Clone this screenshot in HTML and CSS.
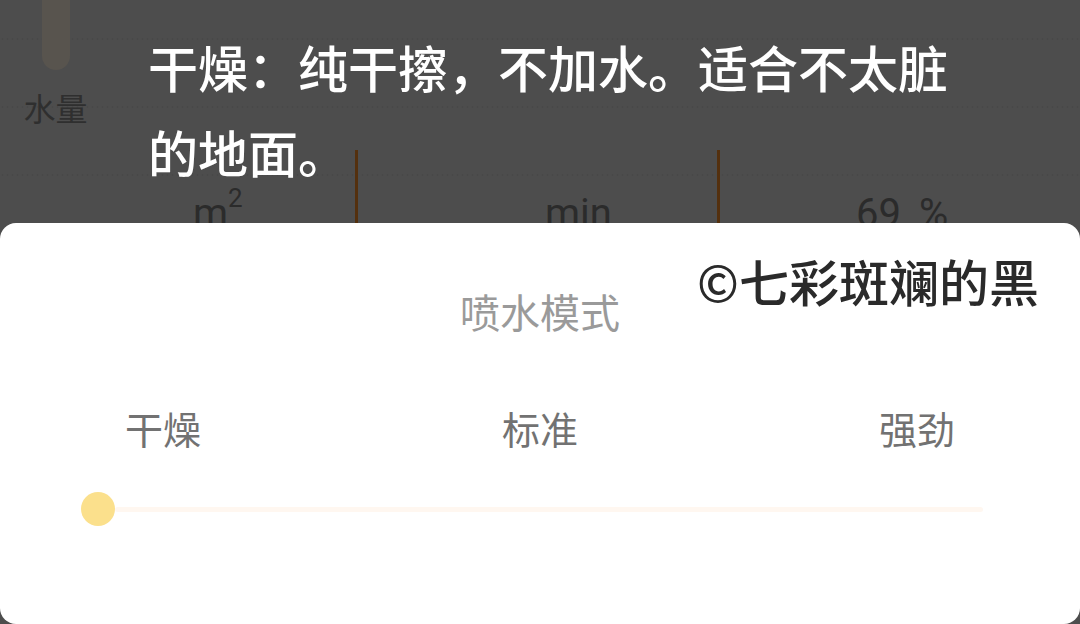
FILE: index.html
```html
<!DOCTYPE html>
<html lang="zh-CN">

<head>
    <meta charset="UTF-8" />
    <meta name="viewport" content="width=device-width, initial-scale=1.0" />
    <title>喷水模式</title>
    <link rel="stylesheet" href="styles.css">
</head>

<body>
    <!-- Page behind the sheet (dimmed) -->
    <div class="app">
        <div class="water">
            <div class="water-bar"></div>
            <div class="water-label">水量</div>
        </div>

        <div class="stats">
            <div class="stat stat-area">m<sup>2</sup></div>
            <div class="stat stat-time">min</div>
            <div class="stat stat-battery">69<span class="unit">%</span></div>
        </div>
    </div>

    <!-- Mode hint -->
    <div class="caption">干燥：纯干擦，不加水。适合不太脏的地面。</div>

    <!-- Bottom sheet -->
    <div class="sheet">
        <h2 class="sheet-title">喷水模式</h2>

        <div class="modes">
            <span>干燥</span>
            <span>标准</span>
            <span>强劲</span>
        </div>

        <div class="slider">
            <div class="slider-thumb"></div>
            <div class="slider-track"></div>
        </div>

        <div class="watermark">©七彩斑斓的黑</div>
    </div>
</body>

</html>
```

FILE: styles.css
```css
body {
    font-family: "Noto Sans CJK SC", "Noto Sans", sans-serif;
    margin: 0;
    width: 1080px;
    height: 624px;
    overflow: hidden;
    position: relative;
    background-color: #4d4d4d;
    background-image:
        radial-gradient(circle, rgba(0, 0, 0, 0.06) 0.8px, transparent 1.2px);
    background-size: 5px 68px;
    background-position: 0 5px;
}

.water {
    width: 112px;
    display: flex;
    flex-direction: column;
    align-items: center;
}

.water-bar {
    width: 28px;
    height: 70px;
    background-color: #58544e;
    border-radius: 0 0 14px 14px;
}

.water-label {
    margin-top: 16px;
    margin-left: -1px;
    font-size: 32px;
    line-height: 42px;
    color: #2f2f2f;
}

.stats {
    display: flex;
    margin-top: 22px;
    height: 80px;
}

.stat {
    font-family: Roboto, "Noto Sans", sans-serif;
    font-size: 40px;
    color: #2b2b2b;
    padding-top: 40px;
    box-sizing: border-box;
}

.stat sup {
    font-size: 26px;
    vertical-align: 20px;
    line-height: 0;
}

.stat .unit {
    margin-left: 18px;
}

.stat-area {
    width: 358px;
    padding-left: 193px;
    border-right: 3px solid #54300e;
}

.stat-time {
    width: 362px;
    padding-left: 187px;
    border-right: 3px solid #54300e;
}

.stat-battery {
    flex: 1;
    padding-left: 136px;
}

.caption {
    position: absolute;
    top: 24px;
    left: 148px;
    width: 810px;
    font-size: 50px;
    font-weight: 500;
    line-height: 85px;
    color: #ffffff;
}

.sheet {
    position: absolute;
    top: 223px;
    left: 0;
    right: 0;
    bottom: 0;
    background: #ffffff;
    border-radius: 16px;
    display: flex;
    flex-direction: column;
}

.sheet-title {
    margin: 60px 0 0 0;
    text-align: center;
    font-size: 40px;
    font-weight: 400;
    line-height: 56px;
    color: #9a9a9a;
}

.modes {
    display: flex;
    justify-content: space-between;
    padding: 0 125px;
    margin-top: 62px;
    font-size: 38px;
    line-height: 54px;
    color: #727272;
}

.slider {
    display: flex;
    align-items: center;
    margin: 37px 0 0 81px;
    width: 902px;
}

.slider-thumb {
    width: 34px;
    height: 34px;
    border-radius: 50%;
    background-color: #fbe08c;
    flex: none;
}

.slider-track {
    flex: 1;
    height: 5px;
    background-color: #fff7f0;
    border-radius: 3px;
}

.watermark {
    position: absolute;
    top: 26px;
    left: 697px;
    font-size: 50px;
    font-weight: 500;
    line-height: 62px;
    color: #2a2a2a;
    white-space: nowrap;
}
```
